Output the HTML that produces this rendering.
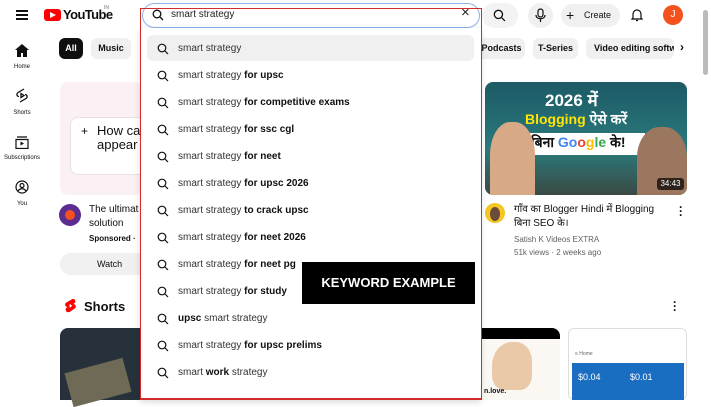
<!DOCTYPE html>
<html><head><meta charset="utf-8"><style>
*{margin:0;padding:0;box-sizing:border-box}
body{width:711px;height:400px;overflow:hidden;background:#fff;font-family:"Liberation Sans","Noto Sans CJK SC",sans-serif;color:#0f0f0f;position:relative}
.a{position:absolute}
.chip{position:absolute;top:38px;height:21px;border-radius:6px;background:#f0f0f0;font-size:9px;font-weight:bold;line-height:21px;text-align:center;color:#0f0f0f;white-space:nowrap;overflow:hidden}
.side{position:absolute;left:0;width:44px;text-align:center;font-size:6px;color:#0f0f0f}
.row{position:absolute;left:147px;width:327px;height:26px;font-size:10px;color:#333;line-height:27px;padding-left:31px}
.row b{color:#0f0f0f}
.row svg{position:absolute;left:10px;top:8px}
</style></head><body>
<div class="a" style="left:16px;top:10px;width:12px;height:2px;background:#0f0f0f;box-shadow:0 4px 0 #0f0f0f,0 8px 0 #0f0f0f"></div>
<div class="a" style="left:44px;top:9px;width:17px;height:12px;background:#f00;border-radius:3px"></div>
<div class="a" style="left:50px;top:12px;width:0;height:0;border-left:6px solid #fff;border-top:3.5px solid transparent;border-bottom:3.5px solid transparent"></div>
<div class="a" style="left:63px;top:7px;font-size:13px;font-weight:bold;letter-spacing:-0.6px">YouTube</div>
<div class="a" style="left:104px;top:5px;font-size:5px;color:#777">IN</div>
<div class="a" style="left:142px;top:3px;width:338px;height:25px;border:1px solid #8ab4e8;border-radius:13px"></div>
<svg class="a" style="left:152px;top:9px" width="12" height="12" viewBox="0 0 12 12"><circle cx="5" cy="5" r="3.8" fill="none" stroke="#0f0f0f" stroke-width="1.3"/><path d="M8 8l3 3" stroke="#0f0f0f" stroke-width="1.3"/></svg>
<div class="a" style="left:171px;top:9px;font-size:10px;color:#222">smart strategy</div>
<div class="a" style="left:461px;top:4px;font-size:15px;color:#222">×</div>
<div class="a" style="left:482px;top:3px;width:36px;height:25px;border-radius:13px;background:#f3f3f3"></div>
<svg class="a" style="left:493px;top:9px" width="13" height="13" viewBox="0 0 12 12"><circle cx="5" cy="5" r="3.8" fill="none" stroke="#0f0f0f" stroke-width="1.2"/><path d="M8 8l3 3" stroke="#0f0f0f" stroke-width="1.2"/></svg>
<div class="a" style="left:528px;top:3px;width:25px;height:25px;border-radius:50%;background:#f0f0f0"></div>
<svg class="a" style="left:535px;top:8px" width="11" height="14" viewBox="0 0 11 14"><rect x="3" y="1" width="5" height="8" rx="2.5" fill="none" stroke="#0f0f0f" stroke-width="1.2"/><path d="M1 7c0 5 9 5 9 0M5.5 11v3" fill="none" stroke="#0f0f0f" stroke-width="1.2"/></svg>
<div class="a" style="left:561px;top:4px;width:59px;height:23px;border-radius:12px;background:#f0f0f0;font-size:9px;line-height:23px;padding-left:23px">Create</div>
<div class="a" style="left:566px;top:9px;font-size:14px;line-height:13px">+</div>
<svg class="a" style="left:631px;top:8px" width="12" height="14" viewBox="0 0 12 14"><path d="M2 10V6a4 4 0 018 0v4l1 1H1zM5 12.5h2" fill="none" stroke="#0f0f0f" stroke-width="1.2"/></svg>
<div class="a" style="left:663px;top:5px;width:20px;height:20px;border-radius:50%;background:#f4511e;color:#fff;font-size:10px;text-align:center;line-height:20px">J</div>
<div class="a" style="left:703px;top:10px;width:5px;height:65px;border-radius:3px;background:#bbb"></div>
<svg class="a" style="left:15px;top:44px" width="14" height="13" viewBox="0 0 14 13"><path d="M7 0L0 6h2v7h4V9h2v4h4V6h2z" fill="#0f0f0f"/></svg>
<div class="side" style="top:64px">Home</div>
<svg class="a" style="left:16px;top:88px" width="12" height="15" viewBox="0 0 12 15"><path d="M8 1L2 4.5c-2 1.5-1 4 1 4M4 14l6-3.5c2-1.5 1-4-1-4M5 5.5l3 2-3 2z" fill="none" stroke="#0f0f0f" stroke-width="1.3"/></svg>
<div class="side" style="top:110px">Shorts</div>
<svg class="a" style="left:15px;top:136px" width="14" height="13" viewBox="0 0 14 13"><path d="M2 1h10M1 3.5h12v9H1z" fill="none" stroke="#0f0f0f" stroke-width="1.2"/><path d="M5.5 5.5l3.5 2-3.5 2z" fill="#0f0f0f"/></svg>
<div class="side" style="top:155px">Subscriptions</div>
<svg class="a" style="left:15px;top:180px" width="14" height="14" viewBox="0 0 14 14"><circle cx="7" cy="7" r="6" fill="none" stroke="#0f0f0f" stroke-width="1.2"/><circle cx="7" cy="5.5" r="2" fill="none" stroke="#0f0f0f" stroke-width="1.2"/><path d="M3 11c2-3 6-3 8 0" fill="none" stroke="#0f0f0f" stroke-width="1.2"/></svg>
<div class="side" style="top:201px">You</div>
<div class="chip" style="left:59px;width:24px;background:#0f0f0f;color:#fff">All</div>
<div class="chip" style="left:91px;width:40px">Music</div>
<div class="chip" style="left:478px;width:47px">Podcasts</div>
<div class="chip" style="left:533px;width:45px">T-Series</div>
<div class="chip" style="left:586px;width:88px;text-align:left;padding-left:8px">Video editing softwar</div>
<div class="a" style="left:680px;top:40px;font-size:12px;font-weight:bold">›</div>
<div class="a" style="left:60px;top:82px;width:82px;height:113px;background:#fbf1f5;border-radius:8px"></div>
<div class="a" style="left:70px;top:117px;width:72px;height:58px;background:#fff;border:1px solid #e6e0e4;border-right:none;border-radius:8px 0 0 8px"></div>
<div class="a" style="left:81px;top:124px;font-size:12px">+</div>
<div class="a" style="left:97px;top:124px;font-size:13px;line-height:14px">How ca<br>appear</div>
<div class="a" style="left:59px;top:204px;width:22px;height:22px;border-radius:50%;background:#5b2d90"></div>
<div class="a" style="left:65px;top:210px;width:10px;height:10px;border-radius:50%;background:#f4511e"></div>
<div class="a" style="left:89px;top:203px;font-size:10px;line-height:14px">The ultimat<br>solution</div>
<div class="a" style="left:89px;top:234px;font-size:8px;font-weight:bold">Sponsored ·</div>
<div class="a" style="left:60px;top:253px;width:82px;height:22px;background:#f0f0f0;border-radius:11px 0 0 11px;font-size:9px;line-height:22px;padding-left:37px">Watch</div>
<svg class="a" style="left:65px;top:299px" width="11" height="14" viewBox="0 0 12 15"><path d="M8 0L1 4c-2 2 0 5 2 4.5L1 10c-1 3 1 5 4 4l6-4c2-2 0-5-2-4.5L11 4c1-3-1-5-3-4z" fill="#f00"/><path d="M5 5l3 2.3L5 9.6z" fill="#fff"/></svg>
<div class="a" style="left:84px;top:299px;font-size:13px;font-weight:bold">Shorts</div>
<div class="a" style="left:673px;top:300px;font-size:12px;font-weight:bold;line-height:4px">·<br>·<br>·</div>
<div class="a" style="left:60px;top:328px;width:82px;height:72px;background:#26313b;border-radius:8px 0 0 0"></div>
<div class="a" style="left:68px;top:365px;width:60px;height:35px;background:#6e6a55;transform:rotate(-15deg)"></div>
<div class="a" style="left:478px;top:328px;width:82px;height:11px;background:#000;border-radius:0 8px 0 0"></div>
<div class="a" style="left:482px;top:339px;width:78px;height:61px;background:#fbf7f2"></div>
<div class="a" style="left:492px;top:342px;width:40px;height:48px;background:#e9c9a8;border-radius:50% 40% 30% 30%"></div>
<div class="a" style="left:484px;top:388px;font-size:7px;font-weight:bold">n.love.</div>
<div class="a" style="left:568px;top:328px;width:119px;height:72px;background:#fff;border:1px solid #ddd;border-radius:6px"></div>
<div class="a" style="left:575px;top:351px;font-size:5px;color:#666">≡ Home</div>
<div class="a" style="left:572px;top:363px;width:112px;height:37px;background:#1a6ec2"></div>
<div class="a" style="left:578px;top:372px;font-size:9px;color:#fff">$0.04</div>
<div class="a" style="left:630px;top:372px;font-size:9px;color:#fff">$0.01</div>
<div class="a" style="left:485px;top:82px;width:202px;height:113px;border-radius:8px;background:linear-gradient(180deg,#1d5a66,#2a7a7c 60%,#3a4a44);overflow:hidden">
 <div class="a" style="left:60px;top:6px;font-size:17px;font-weight:bold;color:#fff">2026 में</div>
 <div class="a" style="left:40px;top:28px;font-size:14px;font-weight:bold;color:#ffe600">Blogging <span style="color:#fff">ऐसे करें</span></div>
 <div class="a" style="left:40px;top:51px;width:120px;height:22px;background:#fff;font-size:14px;font-weight:bold;color:#111;padding-left:6px">बिना <span style="color:#4285f4">Go</span><span style="color:#ea4335">o</span><span style="color:#fbbc05">g</span><span style="color:#34a853">le</span> के!</div>
 <div class="a" style="left:5px;top:40px;width:45px;height:73px;background:#d8a987;border-radius:45% 45% 0 0"></div>
 <div class="a" style="left:152px;top:45px;width:50px;height:68px;background:#9b7760;border-radius:45% 45% 0 0"></div>
 <div class="a" style="left:172px;top:96px;width:27px;height:12px;background:rgba(0,0,0,.7);border-radius:3px;color:#fff;font-size:8px;text-align:center;line-height:12px">34:43</div>
</div>
<div class="a" style="left:485px;top:203px;width:20px;height:20px;border-radius:50%;background:#f3c623"></div>
<div class="a" style="left:490px;top:207px;width:10px;height:14px;border-radius:50%;background:#6b4b3a"></div>
<div class="a" style="left:514px;top:203px;font-size:10px;line-height:14px">गाँव का Blogger Hindi में Blogging<br>बिना SEO के।</div>
<div class="a" style="left:514px;top:233px;font-size:8px;color:#606060;line-height:13px">Satish K Videos EXTRA<br>51k views · 2 weeks ago</div>
<div class="a" style="left:679px;top:205px;font-size:12px;font-weight:bold;line-height:4px">·<br>·<br>·</div>
<div class="a" style="left:140px;top:28px;width:341px;height:372px;background:#fff;box-shadow:0 2px 6px rgba(0,0,0,.15)"></div>
<div class="a" style="left:140px;top:8px;width:342px;height:392px;border:1.5px solid #d42a2a;border-bottom-width:2px"></div>
<div class="row" style="top:35px;background:#f0f0f0;border-radius:6px"><svg width="12" height="12" viewBox="0 0 12 12"><circle cx="5" cy="5" r="3.8" fill="none" stroke="#0f0f0f" stroke-width="1.2"/><path d="M8 8l3 3" stroke="#0f0f0f" stroke-width="1.2"/></svg>smart strategy</div>
<div class="row" style="top:62px"><svg width="12" height="12" viewBox="0 0 12 12"><circle cx="5" cy="5" r="3.8" fill="none" stroke="#0f0f0f" stroke-width="1.2"/><path d="M8 8l3 3" stroke="#0f0f0f" stroke-width="1.2"/></svg>smart strategy <b>for upsc</b></div>
<div class="row" style="top:89px"><svg width="12" height="12" viewBox="0 0 12 12"><circle cx="5" cy="5" r="3.8" fill="none" stroke="#0f0f0f" stroke-width="1.2"/><path d="M8 8l3 3" stroke="#0f0f0f" stroke-width="1.2"/></svg>smart strategy <b>for competitive exams</b></div>
<div class="row" style="top:116px"><svg width="12" height="12" viewBox="0 0 12 12"><circle cx="5" cy="5" r="3.8" fill="none" stroke="#0f0f0f" stroke-width="1.2"/><path d="M8 8l3 3" stroke="#0f0f0f" stroke-width="1.2"/></svg>smart strategy <b>for ssc cgl</b></div>
<div class="row" style="top:143px"><svg width="12" height="12" viewBox="0 0 12 12"><circle cx="5" cy="5" r="3.8" fill="none" stroke="#0f0f0f" stroke-width="1.2"/><path d="M8 8l3 3" stroke="#0f0f0f" stroke-width="1.2"/></svg>smart strategy <b>for neet</b></div>
<div class="row" style="top:170px"><svg width="12" height="12" viewBox="0 0 12 12"><circle cx="5" cy="5" r="3.8" fill="none" stroke="#0f0f0f" stroke-width="1.2"/><path d="M8 8l3 3" stroke="#0f0f0f" stroke-width="1.2"/></svg>smart strategy <b>for upsc 2026</b></div>
<div class="row" style="top:197px"><svg width="12" height="12" viewBox="0 0 12 12"><circle cx="5" cy="5" r="3.8" fill="none" stroke="#0f0f0f" stroke-width="1.2"/><path d="M8 8l3 3" stroke="#0f0f0f" stroke-width="1.2"/></svg>smart strategy <b>to crack upsc</b></div>
<div class="row" style="top:224px"><svg width="12" height="12" viewBox="0 0 12 12"><circle cx="5" cy="5" r="3.8" fill="none" stroke="#0f0f0f" stroke-width="1.2"/><path d="M8 8l3 3" stroke="#0f0f0f" stroke-width="1.2"/></svg>smart strategy <b>for neet 2026</b></div>
<div class="row" style="top:251px"><svg width="12" height="12" viewBox="0 0 12 12"><circle cx="5" cy="5" r="3.8" fill="none" stroke="#0f0f0f" stroke-width="1.2"/><path d="M8 8l3 3" stroke="#0f0f0f" stroke-width="1.2"/></svg>smart strategy <b>for neet pg</b></div>
<div class="row" style="top:278px"><svg width="12" height="12" viewBox="0 0 12 12"><circle cx="5" cy="5" r="3.8" fill="none" stroke="#0f0f0f" stroke-width="1.2"/><path d="M8 8l3 3" stroke="#0f0f0f" stroke-width="1.2"/></svg>smart strategy <b>for study</b></div>
<div class="row" style="top:305px"><svg width="12" height="12" viewBox="0 0 12 12"><circle cx="5" cy="5" r="3.8" fill="none" stroke="#0f0f0f" stroke-width="1.2"/><path d="M8 8l3 3" stroke="#0f0f0f" stroke-width="1.2"/></svg><b>upsc</b> smart strategy</div>
<div class="row" style="top:332px"><svg width="12" height="12" viewBox="0 0 12 12"><circle cx="5" cy="5" r="3.8" fill="none" stroke="#0f0f0f" stroke-width="1.2"/><path d="M8 8l3 3" stroke="#0f0f0f" stroke-width="1.2"/></svg>smart strategy <b>for upsc prelims</b></div>
<div class="row" style="top:359px"><svg width="12" height="12" viewBox="0 0 12 12"><circle cx="5" cy="5" r="3.8" fill="none" stroke="#0f0f0f" stroke-width="1.2"/><path d="M8 8l3 3" stroke="#0f0f0f" stroke-width="1.2"/></svg>smart <b>work</b> strategy</div>
<div class="a" style="left:302px;top:262px;width:173px;height:42px;background:#000;color:#fff;font-size:13px;font-weight:bold;text-align:center;line-height:42px">KEYWORD EXAMPLE</div>
</body></html>
